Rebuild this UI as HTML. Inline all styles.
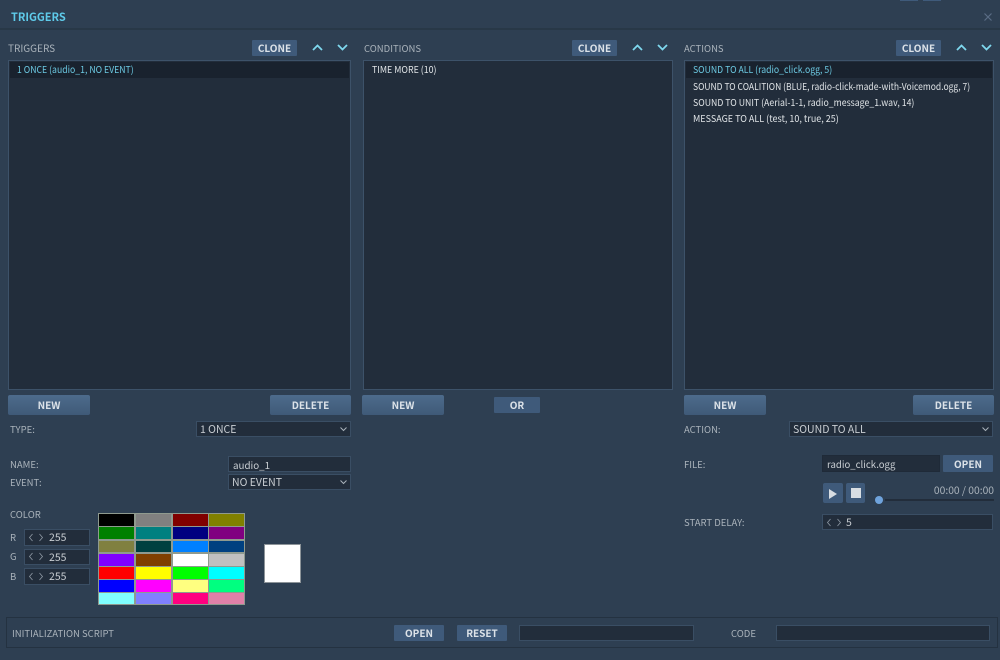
<!DOCTYPE html>
<html><head><meta charset="utf-8"><style>
html,body{margin:0;padding:0;background:#2e3f52}
#p{position:relative;width:1000px;height:660px;overflow:hidden;background:#2e3f52;font-family:"Noto Sans CJK SC","Liberation Sans",sans-serif;font-size:9.5px;color:#a9b2ba}
#p div{position:absolute;box-sizing:border-box;white-space:nowrap}
.t{line-height:12px;height:12px}
.list{background:#222d3b;border:1px solid #3d5269}
.sel{background:#19222e;left:1px;top:1px;height:16px}
.row{line-height:16px;height:16px;color:#dfe3e6;font-size:9.5px;transform:scaleX(.915);transform-origin:left center}
.btn{background:linear-gradient(#4d6b8c,#3f5a78);border-radius:2px;color:#dce2e8;font-weight:bold;text-align:center;font-size:10px;line-height:20px;height:20px}
.sm{background:#3f5a7a;border-radius:1px;color:#dce2e8;font-weight:bold;text-align:center;font-size:10px}
.in{background:#222d3b;border:1px solid #3a4e64;color:#c9ced3;line-height:16px;padding-left:3px;font-size:10.5px}
svg{position:absolute;overflow:visible}
</style></head><body><div id="p">
<div style="left:0;top:28px;width:1000px;height:2px;background:#283847"></div>
<div class="t" style="left:11px;top:11px;color:#5fcbea;font-weight:bold;font-size:11px">TRIGGERS</div>
<div style="left:900px;top:0;width:18px;height:1px;background:#3f5a7a"></div>
<div style="left:923px;top:0;width:18px;height:1px;background:#3f5a7a"></div>
<svg style="left:984px;top:13px" width="8" height="8"><path d="M0.5 0.5L7.5 7.5M7.5 0.5L0.5 7.5" stroke="#5a6d85" stroke-width="1.2" fill="none"/></svg>

<div class="t" style="left:8px;top:42px;font-size:10px">TRIGGERS</div>
<div class="sm" style="left:252px;top:40px;width:45px;height:16px;line-height:16px">CLONE</div>
<svg style="left:312px;top:44px" width="11" height="7"><path d="M1 6L5.5 1.5L10 6" stroke="#7fd8ee" stroke-width="1.8" fill="none"/></svg>
<svg style="left:337px;top:44px" width="11" height="7"><path d="M1 1L5.5 5.5L10 1" stroke="#7fd8ee" stroke-width="1.8" fill="none"/></svg>
<div class="list" style="left:8px;top:60px;width:343px;height:330px"><div class="sel" style="width:339px"></div></div>
<div class="row" style="left:17px;top:61px;color:#6cc9e2">1 ONCE (audio_1, NO EVENT)</div>

<div class="t" style="left:364px;top:42px">CONDITIONS</div>
<div class="sm" style="left:572px;top:40px;width:45px;height:16px;line-height:16px">CLONE</div>
<svg style="left:632px;top:44px" width="11" height="7"><path d="M1 6L5.5 1.5L10 6" stroke="#7fd8ee" stroke-width="1.8" fill="none"/></svg>
<svg style="left:657px;top:44px" width="11" height="7"><path d="M1 1L5.5 5.5L10 1" stroke="#7fd8ee" stroke-width="1.8" fill="none"/></svg>
<div class="list" style="left:363px;top:60px;width:310px;height:330px"></div>
<div class="row" style="left:372px;top:61px;transform:scaleX(.93)">TIME MORE (10)</div>

<div class="t" style="left:684px;top:42px">ACTIONS</div>
<div class="sm" style="left:896px;top:40px;width:45px;height:16px;line-height:16px">CLONE</div>
<svg style="left:956px;top:44px" width="11" height="7"><path d="M1 6L5.5 1.5L10 6" stroke="#7fd8ee" stroke-width="1.8" fill="none"/></svg>
<svg style="left:981px;top:44px" width="11" height="7"><path d="M1 1L5.5 5.5L10 1" stroke="#7fd8ee" stroke-width="1.8" fill="none"/></svg>
<div class="list" style="left:684px;top:60px;width:310px;height:330px"><div class="sel" style="width:306px"></div></div>
<div class="row" style="left:693px;top:61px;color:#6cc9e2">SOUND TO ALL (radio_click.ogg, 5)</div>
<div class="row" style="left:693px;top:78px;transform:scaleX(.896)">SOUND TO COALITION (BLUE, radio-click-made-with-Voicemod.ogg, 7)</div>
<div class="row" style="left:693px;top:94px;transform:scaleX(.92)">SOUND TO UNIT (Aerial-1-1, radio_message_1.wav, 14)</div>
<div class="row" style="left:693px;top:110px;transform:scaleX(.947)">MESSAGE TO ALL (test, 10, true, 25)</div>

<div class="btn" style="left:8px;top:395px;width:82px">NEW</div>
<div class="btn" style="left:270px;top:395px;width:81px">DELETE</div>
<div class="btn" style="left:362px;top:395px;width:82px">NEW</div>
<div class="sm" style="left:494px;top:397px;width:46px;height:16px;line-height:16px">OR</div>
<div class="btn" style="left:684px;top:395px;width:82px">NEW</div>
<div class="btn" style="left:913px;top:395px;width:81px">DELETE</div>

<div class="t" style="left:10px;top:423px">TYPE:</div>
<div class="in" style="left:196px;top:421px;width:155px;height:16px">1 ONCE</div>
<svg style="left:340px;top:427px" width="7" height="4"><path d="M0.5 0.5L3.5 3.5L6.5 0.5" stroke="#a9b2ba" fill="none"/></svg>
<div class="t" style="left:10px;top:458px">NAME:</div>
<div class="in" style="left:228px;top:456px;width:123px;height:16px;padding-left:4px;font-size:9.8px">audio_1</div>
<div class="t" style="left:10px;top:476px">EVENT:</div>
<div class="in" style="left:228px;top:474px;width:123px;height:16px">NO EVENT</div>
<svg style="left:340px;top:480px" width="7" height="4"><path d="M0.5 0.5L3.5 3.5L6.5 0.5" stroke="#a9b2ba" fill="none"/></svg>

<div class="t" style="left:10px;top:508px">COLOR</div>
<div class="t" style="left:10px;top:531px">R</div>
<div class="t" style="left:10px;top:550px">G</div>
<div class="t" style="left:10px;top:570px">B</div>
<div class="in" style="left:24px;top:529px;width:66px;height:17px;padding-left:24px">255</div>
<div class="in" style="left:24px;top:549px;width:66px;height:16px;padding-left:24px">255</div>
<div class="in" style="left:24px;top:568px;width:66px;height:17px;padding-left:24px">255</div>
<svg style="left:29px;top:534px" width="14" height="7"><path d="M3.5 0L0.5 3.5L3.5 7M10.5 0L13.5 3.5L10.5 7" stroke="#8f9aa6" stroke-width=".8" fill="none"/></svg>
<svg style="left:29px;top:553px" width="14" height="7"><path d="M3.5 0L0.5 3.5L3.5 7M10.5 0L13.5 3.5L10.5 7" stroke="#8f9aa6" stroke-width=".8" fill="none"/></svg>
<svg style="left:29px;top:573px" width="14" height="7"><path d="M3.5 0L0.5 3.5L3.5 7M10.5 0L13.5 3.5L10.5 7" stroke="#8f9aa6" stroke-width=".8" fill="none"/></svg>

<svg style="left:98px;top:513px" width="147" height="92">
<rect width="147" height="92" fill="#8f9a8f"/>
<g>
<rect x="1" y="1" width="35" height="12" fill="#000"/><rect x="38" y="1" width="35" height="12" fill="#808080"/><rect x="75" y="1" width="35" height="12" fill="#800000"/><rect x="111" y="1" width="35" height="12" fill="#808000"/>
<rect x="1" y="14" width="35" height="12" fill="#008000"/><rect x="38" y="14" width="35" height="12" fill="#008080"/><rect x="75" y="14" width="35" height="12" fill="#000080"/><rect x="111" y="14" width="35" height="12" fill="#800080"/>
<rect x="1" y="28" width="35" height="11" fill="#808040"/><rect x="38" y="28" width="35" height="11" fill="#004040"/><rect x="75" y="28" width="35" height="11" fill="#0080ff"/><rect x="111" y="28" width="35" height="11" fill="#004080"/>
<rect x="1" y="41" width="35" height="12" fill="#8000ff"/><rect x="38" y="41" width="35" height="12" fill="#804000"/><rect x="75" y="41" width="35" height="12" fill="#fff"/><rect x="111" y="41" width="35" height="12" fill="#c0c0c0"/>
<rect x="1" y="54" width="35" height="12" fill="#f00"/><rect x="38" y="54" width="35" height="12" fill="#ff0"/><rect x="75" y="54" width="35" height="12" fill="#0f0"/><rect x="111" y="54" width="35" height="12" fill="#0ff"/>
<rect x="1" y="67" width="35" height="12" fill="#00f"/><rect x="38" y="67" width="35" height="12" fill="#f0f"/><rect x="75" y="67" width="35" height="12" fill="#ffff80"/><rect x="111" y="67" width="35" height="12" fill="#00ff80"/>
<rect x="1" y="80" width="35" height="11" fill="#80ffff"/><rect x="38" y="80" width="35" height="11" fill="#8080ff"/><rect x="75" y="80" width="35" height="11" fill="#ff0080"/><rect x="111" y="80" width="35" height="11" fill="#e080a8"/>
</g></svg>
<div style="left:264px;top:544px;width:37px;height:39px;background:#fff;border:1px solid #8d9499"></div>

<div class="t" style="left:684px;top:423px">ACTION:</div>
<div class="in" style="left:789px;top:421px;width:204px;height:16px">SOUND TO ALL</div>
<svg style="left:982px;top:427px" width="7" height="4"><path d="M0.5 0.5L3.5 3.5L6.5 0.5" stroke="#a9b2ba" fill="none"/></svg>
<div class="t" style="left:684px;top:458px">FILE:</div>
<div class="in" style="left:822px;top:455px;width:118px;height:17px;border-color:#1f2a38;padding-left:4px;font-size:9.6px">radio_click.ogg</div>
<div class="sm" style="left:943px;top:455px;width:50px;height:17px;line-height:17px">OPEN</div>
<div style="left:823px;top:483px;width:20px;height:20px;background:#3f5a7a;border-radius:2px"></div>
<svg style="left:829px;top:489px" width="9" height="10"><path d="M0 0L8 5L0 10Z" fill="#d8dde2"/></svg>
<div style="left:846px;top:483px;width:19px;height:20px;background:#3f5a7a;border-radius:2px"></div>
<div style="left:851px;top:488px;width:10px;height:10px;background:#d8dde2"></div>
<div style="left:885px;top:499px;width:109px;height:2px;background:#222d3b"></div>
<div style="left:875px;top:496px;width:8px;height:8px;border-radius:50%;background:#6fa3dc"></div>
<div class="t" style="right:6px;top:484px;font-size:10.3px">00:00 / 00:00</div>
<div class="t" style="left:684px;top:516px">START DELAY:</div>
<div class="in" style="left:822px;top:514px;width:171px;height:16px;padding-left:23px">5</div>
<svg style="left:827px;top:519px" width="14" height="7"><path d="M3.5 0L0.5 3.5L3.5 7M10.5 0L13.5 3.5L10.5 7" stroke="#8f9aa6" stroke-width=".8" fill="none"/></svg>

<div style="left:6px;top:617px;width:992px;height:31px;border:1px solid #243241;background:#2e3f52"></div>
<div class="t" style="left:12px;top:627px">INITIALIZATION SCRIPT</div>
<div class="sm" style="left:394px;top:625px;width:50px;height:16px;line-height:16px">OPEN</div>
<div class="sm" style="left:457px;top:625px;width:50px;height:16px;line-height:16px">RESET</div>
<div class="in" style="left:519px;top:625px;width:175px;height:16px"></div>
<div class="t" style="left:731px;top:627px">CODE</div>
<div class="in" style="left:776px;top:625px;width:214px;height:16px"></div>
</div></body></html>
